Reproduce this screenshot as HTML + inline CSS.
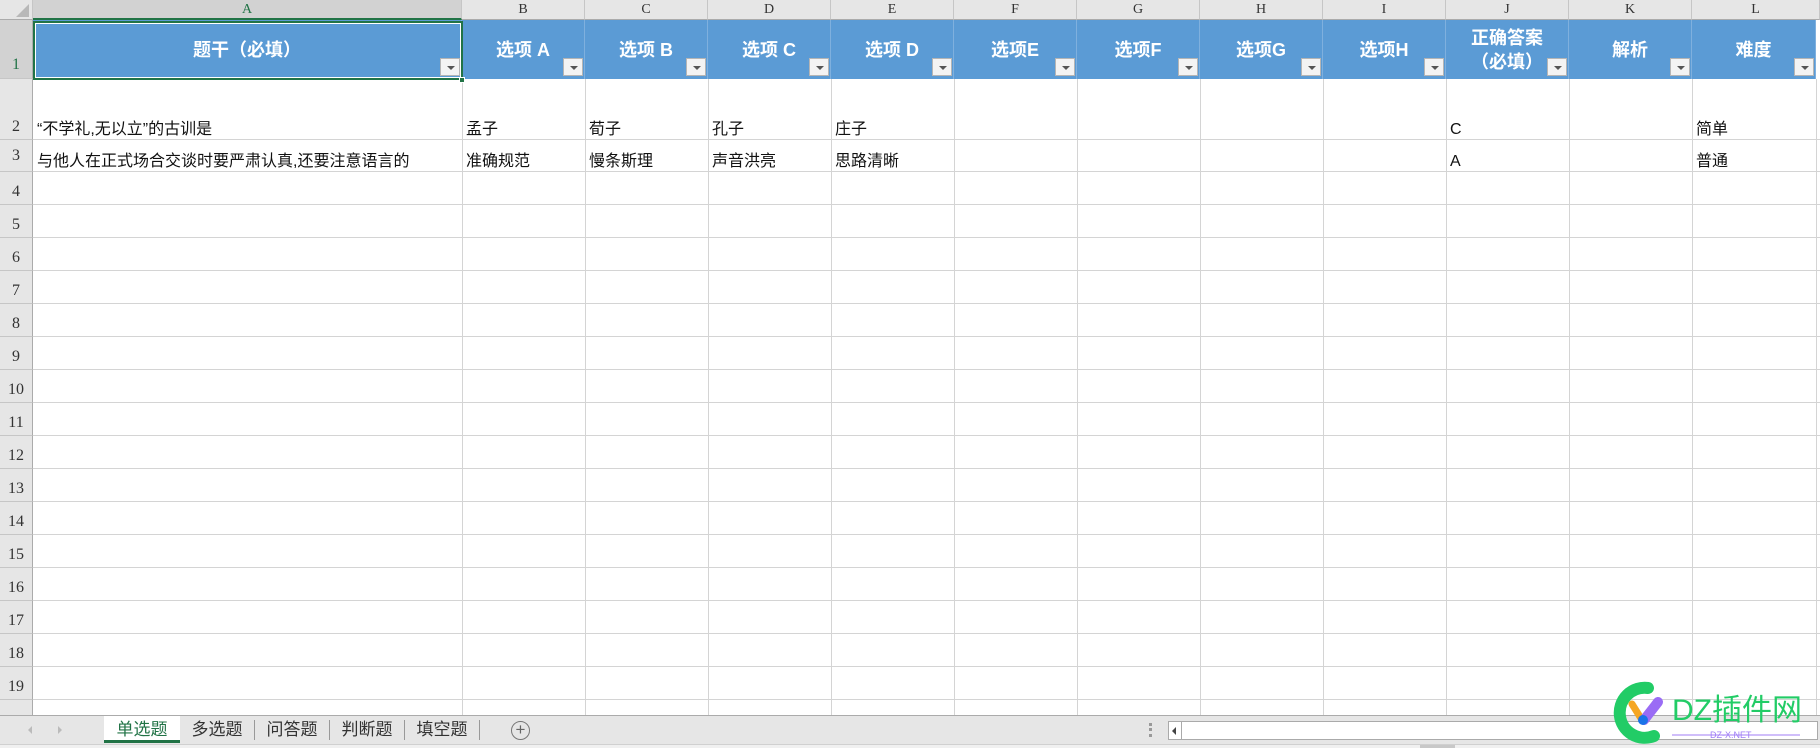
<!DOCTYPE html>
<html><head><meta charset="utf-8">
<style>
*{margin:0;padding:0;box-sizing:border-box}
body{width:1820px;height:748px;overflow:hidden;background:#fff;position:relative;font-family:"Liberation Sans","Noto Sans CJK SC",sans-serif}
.a{position:absolute}
.ch{position:absolute;top:0;height:20px;background:#e6e6e6;border-right:1px solid #c6c6c6;border-bottom:1px solid #ababab;font-family:"Liberation Serif","Noto Serif CJK SC",serif;font-size:14px;color:#333;text-align:center;line-height:20px}
.rh{position:absolute;left:0;width:33px;background:#e6e6e6;border-right:1px solid #ababab;border-bottom:1px solid #c6c6c6;font-family:"Liberation Serif",serif;font-size:16px;color:#333;text-align:center}
.vl{position:absolute;top:79px;width:1px;height:637px;background:#d4d4d4}
.hl{position:absolute;left:33px;width:1787px;height:1px;background:#d4d4d4}
.hd{position:absolute;top:20px;height:59px;background:#5b9bd5;color:#fff;font-weight:bold;font-size:18px;text-align:center;display:flex;align-items:center;justify-content:center;line-height:24px;border-right:1px solid #7fb0de}
.dd{position:absolute;width:20px;height:18px;background:#f3f3f3;border:1px solid #b5b5b5;top:58px}
.dd:after{content:"";position:absolute;left:6px;top:7px;border-left:4px solid transparent;border-right:4px solid transparent;border-top:4px solid #555}
.t{position:absolute;font-size:16px;color:#111;white-space:nowrap;line-height:22px;height:22px}
.tab{position:absolute;top:716px;height:27px;font-size:17px;color:#333;line-height:27px;text-align:center}
</style></head><body>
<div class="ch" style="left:0;width:33px;"></div>
<div class="a" style="left:16px;top:4px;width:0;height:0;border-left:13px solid transparent;border-bottom:13px solid #b8b8b8"></div>
<div class="ch" style="left:33px;width:429px;color:#217346;background:#d2d2d2;border-bottom:2px solid #217346">A</div>
<div class="ch" style="left:462px;width:123px">B</div>
<div class="ch" style="left:585px;width:123px">C</div>
<div class="ch" style="left:708px;width:123px">D</div>
<div class="ch" style="left:831px;width:123px">E</div>
<div class="ch" style="left:954px;width:123px">F</div>
<div class="ch" style="left:1077px;width:123px">G</div>
<div class="ch" style="left:1200px;width:123px">H</div>
<div class="ch" style="left:1323px;width:123px">I</div>
<div class="ch" style="left:1446px;width:123px">J</div>
<div class="ch" style="left:1569px;width:123px">K</div>
<div class="ch" style="left:1692px;width:128px">L</div>
<div class="rh" style="top:20px;height:59px;line-height:90px;color:#217346;background:#d2d2d2">1</div>
<div class="rh" style="top:79px;height:61px;line-height:95px">2</div>
<div class="rh" style="top:140px;height:32px;line-height:32px">3</div>
<div class="rh" style="top:172px;height:33px;line-height:40px">4</div>
<div class="rh" style="top:205px;height:33px;line-height:40px">5</div>
<div class="rh" style="top:238px;height:33px;line-height:40px">6</div>
<div class="rh" style="top:271px;height:33px;line-height:40px">7</div>
<div class="rh" style="top:304px;height:33px;line-height:40px">8</div>
<div class="rh" style="top:337px;height:33px;line-height:40px">9</div>
<div class="rh" style="top:370px;height:33px;line-height:40px">10</div>
<div class="rh" style="top:403px;height:33px;line-height:40px">11</div>
<div class="rh" style="top:436px;height:33px;line-height:40px">12</div>
<div class="rh" style="top:469px;height:33px;line-height:40px">13</div>
<div class="rh" style="top:502px;height:33px;line-height:40px">14</div>
<div class="rh" style="top:535px;height:33px;line-height:40px">15</div>
<div class="rh" style="top:568px;height:33px;line-height:40px">16</div>
<div class="rh" style="top:601px;height:33px;line-height:40px">17</div>
<div class="rh" style="top:634px;height:33px;line-height:40px">18</div>
<div class="rh" style="top:667px;height:33px;line-height:40px">19</div>
<div class="rh" style="top:700px;height:16px"></div>
<div class="vl" style="left:462px"></div><div class="vl" style="left:585px"></div><div class="vl" style="left:708px"></div><div class="vl" style="left:831px"></div><div class="vl" style="left:954px"></div><div class="vl" style="left:1077px"></div><div class="vl" style="left:1200px"></div><div class="vl" style="left:1323px"></div><div class="vl" style="left:1446px"></div><div class="vl" style="left:1569px"></div><div class="vl" style="left:1692px"></div><div class="vl" style="left:1816px"></div>
<div class="hl" style="top:139px"></div><div class="hl" style="top:171px"></div><div class="hl" style="top:204px"></div><div class="hl" style="top:237px"></div><div class="hl" style="top:270px"></div><div class="hl" style="top:303px"></div><div class="hl" style="top:336px"></div><div class="hl" style="top:369px"></div><div class="hl" style="top:402px"></div><div class="hl" style="top:435px"></div><div class="hl" style="top:468px"></div><div class="hl" style="top:501px"></div><div class="hl" style="top:534px"></div><div class="hl" style="top:567px"></div><div class="hl" style="top:600px"></div><div class="hl" style="top:633px"></div><div class="hl" style="top:666px"></div><div class="hl" style="top:699px"></div>
<div class="hd" style="left:33px;width:429px">题干（必填）</div>
<div class="hd" style="left:462px;width:123px">选项 A</div>
<div class="hd" style="left:585px;width:123px">选项 B</div>
<div class="hd" style="left:708px;width:123px">选项 C</div>
<div class="hd" style="left:831px;width:123px">选项 D</div>
<div class="hd" style="left:954px;width:123px">选项E</div>
<div class="hd" style="left:1077px;width:123px">选项F</div>
<div class="hd" style="left:1200px;width:123px">选项G</div>
<div class="hd" style="left:1323px;width:123px">选项H</div>
<div class="hd" style="left:1446px;width:123px">正确答案<br>（必填）</div>
<div class="hd" style="left:1569px;width:123px">解析</div>
<div class="hd" style="left:1692px;width:124px">难度</div>
<div class="a" style="left:33px;top:21px;width:430px;height:59px;border:2px solid #217346;outline:1px solid #fff;outline-offset:-3px"></div>
<div class="a" style="left:459px;top:77px;width:6px;height:6px;background:#217346;border:1px solid #fff"></div>
<div class="dd" style="left:440px"></div><div class="dd" style="left:563px"></div><div class="dd" style="left:686px"></div><div class="dd" style="left:809px"></div><div class="dd" style="left:932px"></div><div class="dd" style="left:1055px"></div><div class="dd" style="left:1178px"></div><div class="dd" style="left:1301px"></div><div class="dd" style="left:1424px"></div><div class="dd" style="left:1547px"></div><div class="dd" style="left:1670px"></div><div class="dd" style="left:1794px"></div>
<div class="t" style="left:37px;top:119px">“不学礼,无以立”的古训是</div>
<div class="t" style="left:466px;top:119px">孟子</div>
<div class="t" style="left:589px;top:119px">荀子</div>
<div class="t" style="left:712px;top:119px">孔子</div>
<div class="t" style="left:835px;top:119px">庄子</div>
<div class="t" style="left:1450px;top:119px">C</div>
<div class="t" style="left:1696px;top:119px">简单</div>
<div class="t" style="left:37px;top:151px">与他人在正式场合交谈时要严肃认真,还要注意语言的</div>
<div class="t" style="left:466px;top:151px">准确规范</div>
<div class="t" style="left:589px;top:151px">慢条斯理</div>
<div class="t" style="left:712px;top:151px">声音洪亮</div>
<div class="t" style="left:835px;top:151px">思路清晰</div>
<div class="t" style="left:1450px;top:151px">A</div>
<div class="t" style="left:1696px;top:151px">普通</div>
<div class="a" style="left:0;top:715px;width:1820px;height:33px;background:#e6e6e6;border-top:1px solid #ababab"></div>
<div class="a" style="left:0;top:744px;width:1820px;height:4px;background:#f0f0f0;border-top:1px solid #d0d0d0"></div>
<div class="a" style="left:28px;top:726px;width:0;height:0;border-top:4px solid transparent;border-bottom:4px solid transparent;border-right:4px solid #bbb"></div>
<div class="a" style="left:58px;top:726px;width:0;height:0;border-top:4px solid transparent;border-bottom:4px solid transparent;border-left:4px solid #bbb"></div>
<div class="tab" style="left:104px;width:76px;background:#fff;color:#217346;border-bottom:3px solid #217346">单选题</div>
<div class="tab" style="left:180px;width:75px;border-right:1px solid #999;height:20px;top:720px;line-height:20px">多选题</div>
<div class="tab" style="left:255px;width:75px;border-right:1px solid #999;height:20px;top:720px;line-height:20px">问答题</div>
<div class="tab" style="left:330px;width:75px;border-right:1px solid #999;height:20px;top:720px;line-height:20px">判断题</div>
<div class="tab" style="left:405px;width:75px;border-right:1px solid #999;height:20px;top:720px;line-height:20px">填空题</div>
<div class="a" style="left:511px;top:721px;width:19px;height:19px;border:1.5px solid #777;border-radius:50%;text-align:center;line-height:15px;color:#666;font-size:17px">+</div>
<div class="a" style="left:1149px;top:723px;width:3px;height:14px;border-left:3px dotted #999"></div>
<div class="a" style="left:1168px;top:721px;width:650px;height:19px;background:#fff;border:1px solid #aaa"></div>
<div class="a" style="left:1168px;top:721px;width:14px;height:19px;border:1px solid #aaa;background:#fff"></div>
<div class="a" style="left:1172px;top:727px;width:0;height:0;border-top:4px solid transparent;border-bottom:4px solid transparent;border-right:4px solid #444"></div>
<div class="a" style="left:1420px;top:745px;width:35px;height:3px;background:#c8c8c8"></div>
<svg class="a" style="left:1610px;top:680px" width="200" height="64" viewBox="0 0 200 64">
<path d="M38 8 A25 25 0 1 0 44 56" fill="none" stroke="#22cc66" stroke-width="12" stroke-linecap="round"/>
<line x1="22" y1="24" x2="32" y2="40" stroke="#f5a623" stroke-width="7" stroke-linecap="round"/>
<line x1="34" y1="40" x2="48" y2="22" stroke="#9a6cf5" stroke-width="10" stroke-linecap="round"/>
<circle cx="33" cy="40" r="5" fill="#1a73e8"/>
<text x="62" y="40" font-family="Liberation Sans,Noto Sans CJK SC,sans-serif" font-size="30" fill="#22cc66">DZ插件网</text>
<text x="100" y="58" font-family="Liberation Sans,sans-serif" font-size="9" fill="#a07ef5">DZ-X.NET</text>
<line x1="62" y1="55" x2="190" y2="55" stroke="#a07ef5" stroke-width="1"/>
</svg>
</body></html>
